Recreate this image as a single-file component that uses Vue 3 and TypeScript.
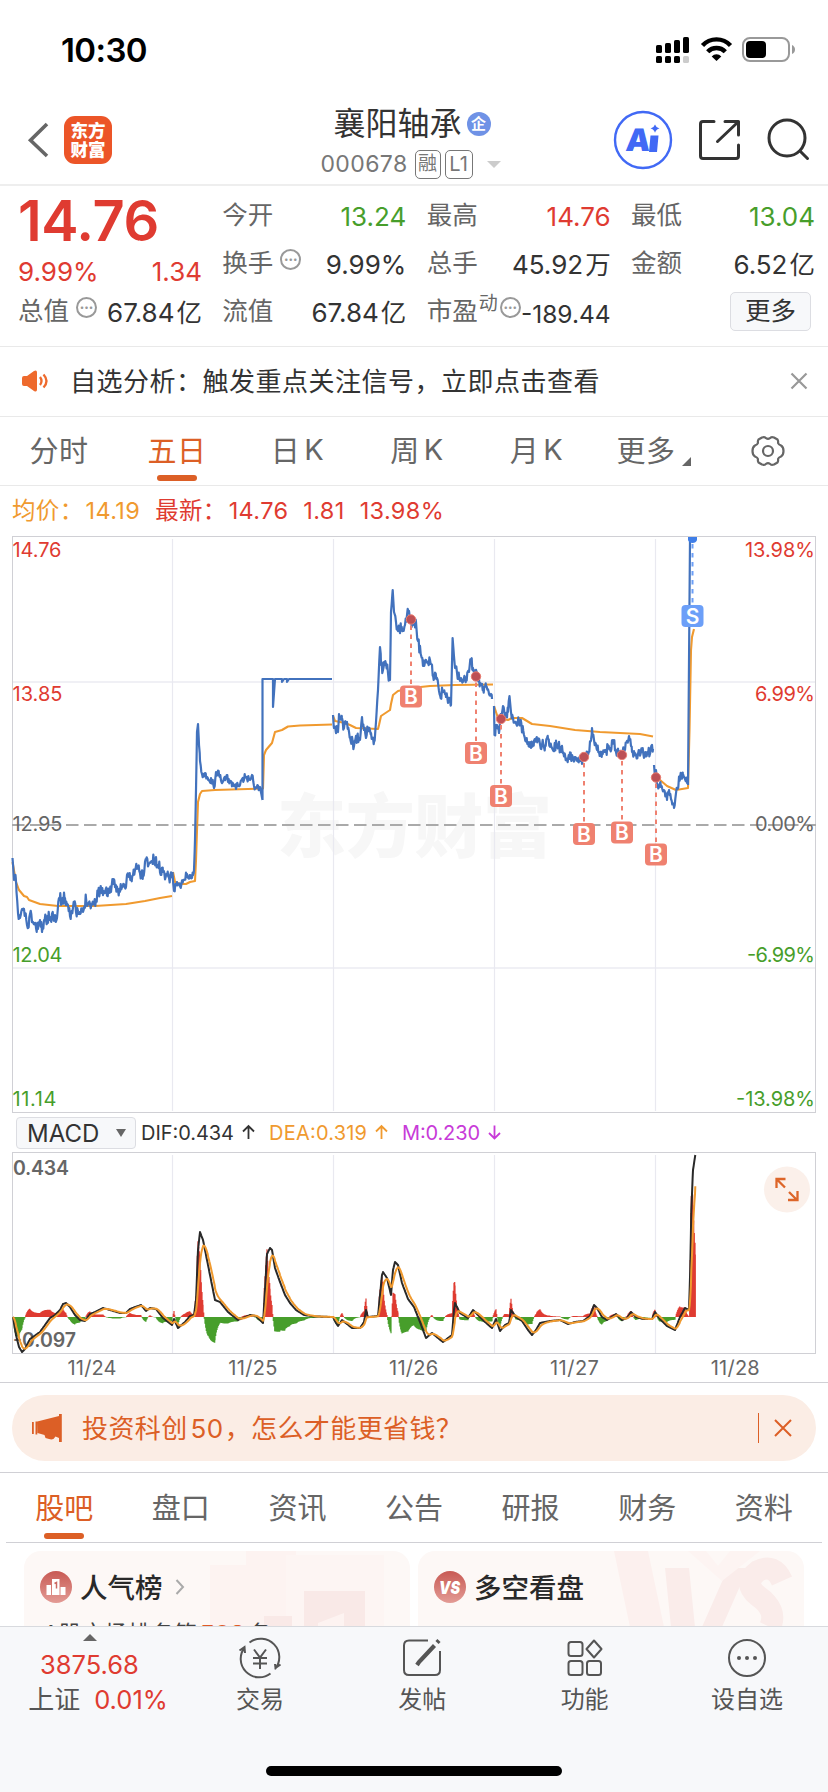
<script setup lang="ts">
type Pt = [number, number]

const tabs = [
  { t: '分时' },
  { t: '五日' },
  { t: '日', k: 'K' },
  { t: '周', k: 'K' },
  { t: '月', k: 'K' },
  { t: '更多' },
]
const sections = ['股吧', '盘口', '资讯', '公告', '研报', '财务', '资料']
const dayLines = [172.5, 333.5, 494.5, 655.5]
const dates = ['11/24', '11/25', '11/26', '11/27', '11/28']

const leftAxis = [
  { y: 557, t: '14.76', c: 'up', w: 49 },
  { y: 701, t: '13.85', c: 'up', w: 50 },
  { y: 831, t: '12.95', c: 'flat', w: 50 },
  { y: 962, t: '12.04', c: 'down', w: 50 },
  { y: 1106, t: '11.14', c: 'down', w: 44 },
]
const rightAxis = [
  { y: 557, t: '13.98%', c: 'up', w: 70 },
  { y: 701, t: '6.99%', c: 'up', w: 60 },
  { y: 831, t: '0.00%', c: 'flat', w: 60 },
  { y: 962, t: '-6.99%', c: 'down', w: 68 },
  { y: 1106, t: '-13.98%', c: 'down', w: 79 },
]

const buys = [
  { x: 411, y: 619.5, b: 696.5 },
  { x: 476, y: 676.5, b: 753 },
  { x: 501, y: 719, b: 796 },
  { x: 584, y: 757, b: 834 },
  { x: 622, y: 755, b: 832.5 },
  { x: 656, y: 777.5, b: 854.5 },
]

// price trace, one list per trading day
const priceDays: Pt[][] = [
  [[12.5, 858], [14, 880], [15.5, 875], [16.5, 892], [18, 913], [20, 918], [22, 909], [25, 914], [27, 925], [28, 928], [30, 914], [33, 922], [36, 928], [38, 929], [40, 920], [42, 932], [44, 920], [50, 917], [55, 915], [57, 918], [59, 898], [62, 900], [65, 898], [68, 905], [71, 914], [74, 904], [76, 912], [80, 914], [83, 912], [86, 898], [90, 904], [94, 904], [98, 893], [101, 888], [105, 893], [109, 891], [113, 884], [118, 890], [122, 887], [126, 887], [127, 875], [131, 879], [135, 870], [138, 867], [140, 873], [143, 875], [146, 860], [150, 863], [154, 860], [158, 866], [163, 872], [167, 875], [172, 878]],
  [[172.5, 872], [174, 891], [177, 882], [180, 886], [184, 880], [187, 874], [190, 878], [193, 875], [194, 870], [195, 840], [196, 790], [197, 732], [198, 724], [199, 745], [200, 761], [202, 774], [205, 773], [207, 777], [209, 780], [212, 781], [214, 788], [216, 772], [219, 775], [222, 783], [226, 777], [230, 781], [234, 786], [240, 785], [245, 777], [249, 779], [252, 775], [254, 786], [260, 787], [262.5, 800]],
  [[333, 715], [334, 728], [338, 732], [339, 714], [342, 718], [344, 728], [347, 722], [350, 737], [354, 746], [357, 738], [360, 740], [362, 717], [364, 730], [366, 738], [368, 728], [371, 733], [374, 742], [376, 722], [378, 690], [380, 647], [381, 665], [383, 670], [384, 662], [386, 664], [388, 673], [390, 680], [391, 612], [392.7, 590], [394, 612], [396, 622], [398, 631], [401, 628], [405, 625], [407, 615], [409, 611], [411, 620], [413, 625], [416, 622], [418, 641], [421, 655], [423, 666], [426, 660], [430, 660], [433, 675], [437, 678], [440, 695], [443, 692], [446, 697], [450, 700], [451, 705], [452.6, 638], [455, 668], [458, 675], [461, 678], [466, 677], [469, 672], [471, 661], [474, 670], [477, 676], [480, 683], [483, 688], [486, 686], [489, 694], [492, 699]],
  [[494, 706], [494.5, 735], [497, 725], [499, 733], [500, 720], [502, 713], [503, 706], [505, 717], [508, 712], [509.5, 696], [511, 712], [515, 722], [520, 721], [524, 735], [528, 742], [531, 748], [534, 741], [538, 740], [542, 745], [545, 746], [548, 739], [552, 748], [557, 745], [560, 748], [565, 755], [568, 759], [572, 755], [576, 758], [580, 761], [584, 756], [588, 755], [591, 740], [592, 728], [594, 740], [597, 750], [602, 753], [606, 750], [610, 748], [613, 740], [616, 752], [620, 755], [625, 750], [627, 741], [629, 736], [632, 752], [636, 755], [642, 752], [648, 754], [653, 749]],
  [[654, 765], [655, 780], [656, 770], [657, 784], [661, 787], [664, 790], [667, 800], [669, 790], [671, 799], [674, 808], [677, 788], [680, 778], [683, 774], [688, 785]],
]

const avgDays: Pt[][] = [
  [[12.5, 862], [16, 882], [19, 890], [24, 896], [27, 897], [29, 900], [40, 904], [58, 906], [95, 906], [126, 904], [145, 901], [160, 898], [172, 896]],
  [[173, 872], [175, 882], [180, 884], [186, 884], [190, 882], [195, 881], [196, 860], [197, 830], [198, 802], [200, 794], [202, 791], [215, 790], [263, 788.5], [264, 755], [266, 750], [272, 743], [275, 732], [282, 730], [288, 726.5], [300, 725.5], [332, 724.5]],
  [[333, 716], [335, 721], [345, 723], [350, 725], [356, 728], [378, 729], [379, 725], [381, 716], [390, 710], [391, 704], [393, 695], [398, 691], [411, 688], [430, 686], [455, 685], [493, 684.5]],
  [[494, 706], [498, 718], [508, 720], [512, 718], [522, 718], [532, 724], [550, 726], [575, 730], [600, 732], [640, 734], [653, 736.5]],
  [[655, 775], [660, 780], [667, 786], [676, 790], [688, 788], [689.5, 730], [691, 650], [692, 637], [694, 629]],
]

const difPts: Pt[] = [[13, 1317], [16, 1335], [19, 1347], [22, 1352], [25, 1349], [30, 1339], [40, 1332], [50, 1318], [55, 1315], [60, 1310], [63, 1304], [66, 1303], [70, 1307], [75, 1315], [80, 1320], [85, 1321], [90, 1314], [95, 1312], [103, 1308], [110, 1310], [120, 1313], [126, 1313], [130, 1309], [135, 1307], [141, 1305], [146, 1311], [150, 1308], [156, 1309], [163, 1318], [172, 1325], [174, 1319], [178, 1328], [185, 1322], [190, 1316], [194, 1315], [196, 1300], [198, 1250], [200, 1232], [203, 1240], [208, 1265], [215, 1300], [220, 1302], [228, 1312], [238, 1320], [250, 1315], [256, 1316], [263, 1323], [265, 1290], [267, 1254], [270, 1248], [272, 1250], [275, 1268], [280, 1282], [285, 1295], [290, 1303], [296, 1310], [304, 1315], [315, 1316.5], [333, 1317], [336, 1323], [338, 1326], [342, 1320], [352, 1328], [360, 1328], [364, 1322], [366, 1310], [368, 1317], [378, 1316], [380, 1295], [382, 1275], [383, 1272], [387, 1278], [391, 1295], [393, 1270], [395, 1262], [398, 1265], [402, 1283], [408, 1299], [414, 1307], [420, 1322], [426, 1338], [432, 1333], [438, 1338], [443, 1342], [452, 1335], [454, 1310], [455, 1303], [460, 1313], [468, 1318], [473, 1310], [480, 1317], [485, 1322], [492, 1328], [496, 1319], [500, 1331], [505, 1325], [509, 1323], [511, 1310], [516, 1317], [522, 1321], [528, 1330], [532, 1335], [536, 1330], [540, 1323], [550, 1321], [560, 1320], [568, 1324], [575, 1322], [583, 1321], [590, 1316], [594, 1305], [597, 1308], [602, 1317], [607, 1320], [616, 1314], [622, 1320], [627, 1318], [631, 1312], [636, 1317], [643, 1319], [652, 1319], [655, 1312], [660, 1319], [667, 1326], [675, 1330], [680, 1317], [685, 1308], [689, 1310], [690.2, 1270], [691.3, 1210], [693, 1170], [695.3, 1155]]

let seed = 11
const rand = (): number => {
  seed = (seed * 16807) % 2147483647
  return seed / 2147483647 - 0.5
}

const toPath = (pts: Pt[]): string =>
  pts.map(([x, y], i) => `${i ? 'L' : 'M'}${x.toFixed(1)} ${y.toFixed(1)}`).join('')

// minute-level ripple between the anchor points
const ripple = (pts: Pt[], amp: number): Pt[] => {
  const out: Pt[] = []
  for (let i = 0; i < pts.length - 1; i++) {
    const [x0, y0] = pts[i]
    const [x1, y1] = pts[i + 1]
    out.push([x0, y0])
    const a = Math.abs(y1 - y0) > 20 ? 2 : amp
    for (let x = x0 + 0.67; x < x1 - 0.3; x += 0.67) {
      out.push([x, y0 + ((y1 - y0) * (x - x0)) / (x1 - x0) + rand() * a])
    }
  }
  out.push(pts[pts.length - 1])
  return out
}

const amps = [12, 7, 11, 11, 10]
const pricePath =
  priceDays.map((d, i) => toPath(ripple(d, amps[i]))).join('') +
  'M262.5 800V679H273V707L275 679H282V682L284 679H287V682L289 679H332M688 785L690 540H692'
const avgPath = avgDays.map(toPath).join('')

const ZERO = 1317
const dif: Pt[] = []
for (let i = 0; i < difPts.length - 1; i++) {
  const [x0, y0] = difPts[i]
  const [x1, y1] = difPts[i + 1]
  for (let x = x0; x < x1; x += 0.667) {
    dif.push([x, y0 + ((y1 - y0) * (x - x0)) / (x1 - x0)])
  }
}
dif.push(difPts[difPts.length - 1])
const dea: Pt[] = []
let ema = ZERO
dif.forEach(([x, y]) => {
  ema += (y - ema) * 0.2
  dea.push([x, ema])
})
let redPath = ''
let greenPath = ''
dif.forEach(([x, y], i) => {
  const h = (y - dea[i][1]) * 2
  const bar = `M${x.toFixed(1)} ${ZERO}V${(ZERO + h).toFixed(1)}`
  if (h < 0) redPath += bar
  else greenPath += bar
})
const difPath = toPath(dif)
const deaPath = toPath(dea)
</script>

<template>
  <div class="phone">
    <div class="status">
      <span class="clock">10:30</span>
      <svg class="status-icons" width="142" height="30" viewBox="652 34 142 30">
        <g>
          <rect x="655" y="45" width="6" height="8" rx="1.6" /><rect x="664" y="43" width="6" height="10" rx="1.6" />
          <rect x="673" y="40" width="6" height="13" rx="1.6" /><rect x="682" y="37" width="6" height="16" rx="1.6" />
          <rect x="655" y="56" width="6" height="7" rx="1.6" /><rect x="664" y="56" width="6" height="7" rx="1.6" />
          <rect x="673" y="56" width="6" height="7" rx="1.6" /><rect x="682" y="56" width="6" height="7" rx="1.6" fill="#ccc" />
        </g>
        <g fill="none" stroke="#000" stroke-width="4.4">
          <path d="M701.5 45.5a19 19 0 0 1 28 0" /><path d="M706.7 51.8a12.2 12.2 0 0 1 17.6 0" />
        </g>
        <path d="M715.5 61l-4.800-4.600a6.600 6.600 0 0 1 9.600 0z" />
        <rect x="742" y="38" width="46" height="23" rx="7" fill="none" stroke="#999" stroke-width="2" />
        <rect x="745" y="41" width="20" height="17" rx="4" /><path d="M791 45v9q3-1.500 3-4.500t-3-4.500z" fill="#999" />
      </svg>
    </div>

    <header class="head">
      <svg class="back" width="24" height="40" viewBox="0 0 24 40"><path d="M20 4L3.500 20.300 20 36" fill="none" stroke="#666" stroke-width="3.600" /></svg>
      <div class="logo"><span>东方</span><span>财富</span></div>
      <div class="name">
        <div class="title">襄阳轴承<i class="qi">企</i></div>
        <div class="code"><span>000678</span><b>融</b><b class="l1">L1</b><i class="caret"></i></div>
      </div>
      <svg class="tools" width="216" height="60" viewBox="610 110 216 60" fill="none">
        <circle cx="642" cy="140" r="28" stroke="#4169f5" stroke-width="2.400" />
        <text class="ai" transform="translate(624 151) skewX(-5)" textLength="22">A</text>
        <path d="M649.500 135.500h8l-1.500 16.500h-8z M654 124.500q1 3.200 4.500 4-3.500.8-4.500 4.300-1-3.500-4.500-4.300 3.500-.8 4.500-4z" fill="#4169f5" />
        <g stroke="#333" stroke-width="3" stroke-linejoin="round" stroke-linecap="round">
          <path d="M713 121.500h-11q-2.500 0-2.500 2.500v32q0 2.500 2.500 2.500h33q2.500 0 2.500-2.500v-11M724 121.500h13.500V135M736.500 122.500l-20 19" />
          <circle cx="786" cy="138" r="18" /><path d="M799 151l7.500 7.500" />
        </g>
      </svg>
    </header>

    <section class="quote">
      <div class="col first">
        <div class="price">14.76</div>
        <div class="cell up pct"><span>9.99%</span><span>1.34</span></div>
        <div class="cell last"><label>总值<i class="dots">•••</i></label><span>67.84<em>亿</em></span></div>
      </div>
      <div class="col">
        <div class="cell"><label>今开</label><span class="down">13.24</span></div>
        <div class="cell"><label>换手<i class="dots">•••</i></label><span>9.99%</span></div>
        <div class="cell"><label>流值</label><span>67.84<em>亿</em></span></div>
      </div>
      <div class="col">
        <div class="cell"><label>最高</label><span class="up">14.76</span></div>
        <div class="cell"><label>总手</label><span>45.92<em>万</em></span></div>
        <div class="cell"><label>市盈<sup>动</sup><i class="dots tight">•••</i></label><span class="pe">-189.44</span></div>
      </div>
      <div class="col">
        <div class="cell"><label>最低</label><span class="down">13.04</span></div>
        <div class="cell"><label>金额</label><span>6.52<em>亿</em></span></div>
        <div class="cell end"><button class="more">更多</button></div>
      </div>
    </section>

    <section class="notice">
      <svg width="28" height="24" viewBox="0 0 28 24"><path d="M1 9q0-2 2-2h3l7-5q3-1.500 3 1.500v17q0 3-3 1.500l-7-5H3q-2 0-2-2z" fill="#ee6a2d" /><path d="M19 8q3 4 0 8M22.500 5.500q6 6.500 0 13" fill="none" stroke="#ee6a2d" stroke-width="2.300" /></svg>
      <span>自选分析：触发重点关注信号，立即点击查看</span>
      <svg class="close" width="18" height="18" viewBox="0 0 18 18"><path d="M1.500 1.500l15 15M16.500 1.500l-15 15" stroke="#999" stroke-width="2.200" /></svg>
    </section>

    <nav class="tabs">
      <span v-for="(t, i) in tabs" :key="t.t" :class="['tab', `tab-${i}`, { on: i === 1, menu: i === 5 }]">{{ t.t }}<i v-if="t.k">{{ t.k }}</i></span>
      <span class="tab gear">
        <svg width="34" height="34" viewBox="-17 -17 34 34" fill="none" stroke="#666" stroke-width="2.200" stroke-linejoin="round">
          <path d="M-6-13.500Q-3-14.500-2-12.800 0-11.500 2-12.800 3-14.500 6-13.500L9.500-11.500Q10.500-9.500 10-8 10.500-6.500 13-5.500 15.500-4 15.500 0 15.500 4 13 5.500 10.500 6.500 10 8 10.500 9.500 9.500 11.500L6 13.500Q3 14.500 2 12.800 0 11.500-2 12.800-3 14.500-6 13.500L-9.500 11.500Q-10.500 9.500-10 8-10.500 6.500-13 5.500-15.500 4-15.500 0-15.500-4-13-5.500-10.500-6.500-10-8-10.500-9.500-9.500-11.500z" />
          <circle r="5" />
        </svg>
      </span>
    </nav>

    <div class="legend"><span class="gold">均价：<u>14.19</u></span><span class="up">最新：<u>14.76</u></span><span class="up">1.81</span><span class="up">13.98%</span></div>

    <svg class="chart" width="828" height="584" viewBox="0 531 828 584">
      <text class="mark" x="277" y="852" textLength="275">东方财富</text>
      <path d="M12 682H816M12 968H816" stroke="#f0f0f5" stroke-width="2" />
      <path v-for="x in dayLines" :key="x" :d="`M${x} 539V1111`" stroke="#e9e9f0" stroke-width="1.200" />
      <rect x="12.500" y="536.500" width="803" height="576" fill="none" stroke="#d0d0d5" />
      <path d="M12 825H816" stroke="#aaa" stroke-width="2" stroke-dasharray="12.500 5.500" />
      <path :d="avgPath" fill="none" stroke="#f09a2f" stroke-width="2.100" stroke-linejoin="round" />
      <path :d="pricePath" fill="none" stroke="#4272bd" stroke-width="2.200" stroke-linejoin="round" />
      <text v-for="a in leftAxis" :key="a.t" :class="['axis', a.c]" x="12.500" :y="a.y" :textLength="a.w">{{ a.t }}</text>
      <text v-for="a in rightAxis" :key="a.t" :class="['axis', a.c]" :x="815 - a.w" :y="a.y" :textLength="a.w">{{ a.t }}</text>
      <g v-for="m in buys" :key="m.x">
        <path :d="`M${m.x} ${m.y + 6}V${m.b - 11}`" stroke="#ef8170" stroke-width="2" stroke-dasharray="4.500 4.500" />
        <circle :cx="m.x" :cy="m.y" r="4.700" fill="#bd5055" stroke="#e97c70" />
        <rect :x="m.x - 11" :y="m.b - 11" width="22" height="22" rx="4" fill="#ef8170" />
        <text class="flag" :x="m.x" :y="m.b + 7.500">B</text>
      </g>
      <path d="M692.500 544V605" stroke="#6c9ff8" stroke-width="2" stroke-dasharray="4.500 4.500" />
      <path d="M688 537h9v3q-1 3-4.500 3t-4.500-3z" fill="#3f7ee8" />
      <rect x="681.500" y="605" width="22" height="22" rx="4" fill="#6c9ff8" />
      <text class="flag" x="692.500" y="623.500">S</text>
    </svg>

    <div class="macd-row">
      <div class="select">MACD<i></i></div>
      <svg width="380" height="30" viewBox="0 0 380 30" class="vals">
        <text x="0" y="22.500" textLength="93" fill="#333">DIF:0.434</text>
        <text x="128" y="22.500" textLength="98" fill="#f09a2f">DEA:0.319</text>
        <text x="261" y="22.500" textLength="78" fill="#c83ad8">M:0.230</text>
        <g fill="none" stroke-width="1.800"><path d="M107.500 22V9M102 14.500l5.500-5.500 5.500 5.500" stroke="#333" /><path d="M240.500 22V9M235 14.500l5.500-5.500 5.500 5.500" stroke="#f09a2f" /><path d="M353.500 8.500v13M348 16l5.500 5.500 5.500-5.500" stroke="#c83ad8" /></g>
      </svg>
    </div>

    <svg class="macd" width="828" height="231" viewBox="0 1151 828 231">
      <rect x="12.500" y="1152.500" width="803" height="201" fill="none" stroke="#d0d0d5" />
      <path v-for="x in dayLines" :key="x" :d="`M${x} 1155V1353`" stroke="#e9e9f0" stroke-width="1.200" />
      <path :d="greenPath" stroke="#479e2b" stroke-width="1.200" />
      <path :d="redPath" stroke="#df3b31" stroke-width="1.200" />
      <text class="scale" x="13" y="1175" textLength="56">0.434</text>
      <text class="scale" x="13" y="1347" textLength="63">-0.097</text>
      <path :d="difPath" fill="none" stroke="#292929" stroke-width="2" stroke-linejoin="round" />
      <path :d="deaPath" fill="none" stroke="#f09a2f" stroke-width="2" stroke-linejoin="round" />
      <circle cx="787" cy="1189.500" r="23" fill="#fbf0ea" />
      <path d="M785 1187.500l-8.500-8.500M776.500 1188v-9h9M789 1192l8.500 8.500M788 1200h9.500v-9" fill="none" stroke="#dd6529" stroke-width="2.300" />
      <text v-for="(d, i) in dates" :key="d" class="date" :x="92 + i * 160.800" y="1375" textLength="49">{{ d }}</text>
    </svg>

    <div class="promo-wrap">
      <div class="promo">
        <svg width="32" height="28" viewBox="0 0 32 28" fill="#dc5f26"><path d="M1 8h1.800v12H1zM4.500 7.500h1.800v13H4.500zM6.300 7.500L28 2v22l-3.500-1.500q-2 4-6.500 2.500l-3.500-1-1-3-7-2z" /><path d="M28 0h2.800v28H28z" /></svg>
        <span class="ptxt">投资科创<i>50</i>，怎么才能更省钱？</span>
        <i class="bar"></i>
        <svg width="18" height="18" viewBox="0 0 18 18"><path d="M1 1l16 16M17 1L1 17" stroke="#dc5f26" stroke-width="2" /></svg>
      </div>
    </div>

    <nav class="sections"><span v-for="(s, i) in sections" :key="s" :class="{ on: i === 0 }">{{ s }}</span></nav>

    <div class="cards">
      <div class="card">
        <svg class="deco" width="386" height="76" viewBox="0 0 386 76"><path d="M186 14h36V0h50v76h-86z" fill="#fdf3f1" /><path d="M262 4h98v72h-98z" fill="#fdf5f3" /><path d="M280 40h61v36h-61zM240 65h28v11h-28z" fill="#f9e9e7" /><path d="M294 72l26-10v14h-26z" fill="#fdf3f1" /></svg>
        <div class="ct">
          <svg width="32" height="32" viewBox="0 0 32 32"><defs><linearGradient id="g1" x2="0" y2="1"><stop stop-color="#c85a54" /><stop offset="1" stop-color="#e39b95" /></linearGradient></defs><circle cx="16" cy="16" r="16" fill="url(#g1)" /><path d="M6.500 14h4.500v10H6.500zM12 8h7.500v16H12zM20.500 16h5v8h-5z" fill="#fff" /><path d="M14.500 12.500l2-1v6" fill="none" stroke="#cb6a64" stroke-width="1.500" /></svg>
          <span>人气榜</span>
          <svg width="10" height="16" viewBox="0 0 10 16"><path d="M1.500 1l6.500 7-6.500 7" fill="none" stroke="#aaa" stroke-width="2" /></svg>
        </div>
        <div class="rank">A股市场排名第<b>508</b>名</div>
      </div>
      <div class="card">
        <svg class="deco" width="386" height="76" viewBox="0 0 386 76"><path d="M196 0h34l16 76h-34z" fill="#fcf0ee" /><path d="M247 17h24l6 59h-24zM284 76l26-59h20l-26 59z" fill="#faecea" /><path d="M364 30q-8-18-24-10-16 12 0 25 20 14 12 31" fill="none" stroke="#faecea" stroke-width="22" /><path d="M270 0h18l12 15 12-15h30l-38 30z" fill="#fdf4f2" /></svg>
        <div class="ct">
          <svg width="32" height="32" viewBox="0 0 32 32"><circle cx="16" cy="16" r="16" fill="url(#g1)" /><text class="vs" x="5" y="23" textLength="21" lengthAdjust="spacingAndGlyphs">VS</text></svg>
          <span>多空看盘</span>
        </div>
      </div>
    </div>

    <footer class="dock">
      <div class="index"><i></i><strong>3875.68</strong><div>上证<span>0.01%</span></div></div>
      <div class="item">
        <svg width="44" height="42" viewBox="-22 -21 44 42"><path d="M-10.500-15.500a18.500 18.500 0 0 1 25.500 26.500M10.500 15.500a18.500 18.500 0 0 1-25.500-26.500M-20.500-7.500l5-3.500.5 6M20.500 6.500l-5 3.500-.5-4M-6-8.500l6 8 6-8M0 0v11M-7 0H7M-7 5.500H7" /></svg><span>交易</span>
      </div>
      <div class="item">
        <svg width="44" height="42" viewBox="-22 -21 44 42"><path d="M6-17.500h-19q-5 0-5 5v24.500q0 5 5 5h26q5 0 5-5v-19" /><path d="M12.500-12.500L-3 4l-2 3" stroke-width="4.200" /><path d="M15-15.500l2-2" stroke-width="4.500" /></svg><span>发帖</span>
      </div>
      <div class="item">
        <svg width="44" height="42" viewBox="-22 -21 44 42"><rect x="-16.500" y="-16" width="14" height="14" rx="2.500" /><rect x="-16.500" y="3" width="14" height="14" rx="2.500" /><rect x="2" y="3" width="14" height="14" rx="2.500" /><path d="M9-17.500l7.500 8.500L9-.5 1.500-9z" stroke-linejoin="round" /></svg><span>功能</span>
      </div>
      <div class="item">
        <svg width="44" height="42" viewBox="-22 -21 44 42"><circle r="18" /><g fill="#555" stroke="none"><circle cx="-8" r="2" /><circle r="2" /><circle cx="8" r="2" /></g></svg><span>设自选</span>
      </div>
      <div class="home"></div>
    </footer>
  </div>
</template>

<style>
body { margin: 0; background: #fff; }
</style>

<style scoped>
.phone { width: 828px; height: 1792px; overflow: hidden; display: flex; flex-direction: column; background: #fff; color: #333; font-family: Inter, "Noto Sans CJK SC", sans-serif; box-sizing: border-box; }
.phone > * { flex: none; box-sizing: border-box; }
i, em { font-style: normal; }
svg { display: block; flex: none; }
.up { color: #df3b31; fill: #df3b31; }
.down { color: #479e2b; fill: #479e2b; }
.flat { fill: #666; }
.gold { color: #f09a2f; }

.status { height: 96px; padding: 34px 33px 0 61px; display: flex; justify-content: space-between; }
.clock { font-size: 33px; line-height: 32px; font-weight: 600; color: #000; letter-spacing: -.6px; }
.status-icons { fill: #000; }

.head { height: 90px; border-bottom: 2px solid #eee; display: flex; align-items: center; padding-left: 27px; }
.logo { width: 48px; height: 48px; margin: 0 0 1px 13px; border-radius: 11px; background: #ec5528; color: #fff; font-size: 17.500px; font-weight: 900; line-height: 19px; display: flex; flex-direction: column; align-items: center; justify-content: center; }
.name { width: 499px; text-align: center; padding-top: 2px; }
.title { height: 40px; display: flex; justify-content: center; align-items: center; font-size: 32px; line-height: 40px; padding-left: 101px; }
.qi { width: 24px; height: 24px; border-radius: 50%; background: #6f92e6; color: #fff; font-size: 15px; font-weight: 700; line-height: 23px; margin-left: 5px; }
.code { height: 32px; margin: 4px 0 -2px; display: flex; align-items: center; justify-content: center; color: #777; font-size: 23px; letter-spacing: .4px; padding-left: 98px; }
.code b { width: 26px; height: 29px; box-sizing: border-box; margin-left: 7px; border: 1.500px solid #777; border-radius: 5px; font-size: 19px; line-height: 26px; font-weight: 400; letter-spacing: 0; }
.code b.l1 { width: 28px; margin-left: 4px; font-size: 20px; }
.caret { border: 7px solid transparent; border-top-color: #ccc; border-bottom: 0; margin-left: 14px; }
.ai { font: 900 31px Inter, sans-serif; fill: #4169f5; }

.quote { height: 161px; border-bottom: 1px solid #e9e9e9; display: flex; padding: 7px 13px 0 18px; justify-content: space-between; }
.col { width: 184px; }
.cell { height: 48px; display: flex; align-items: center; justify-content: space-between; font-size: 26px; line-height: 48px; white-space: nowrap; }
.cell label { color: #666; display: flex; align-items: center; height: 48px; font-size: 25.500px; margin-top: -4px; }
.cell em { margin-left: 2px; font-size: 25.500px; line-height: 0; }
.price { height: 55px; font-size: 56px; line-height: 56px; font-weight: 600; color: #df3b31; letter-spacing: -.4px; }
.first .last { margin-top: -7px; }
.dots { width: 21px; height: 21px; box-sizing: border-box; border: 2px solid #999; border-radius: 50%; margin: -8px 0 0 7px; color: #999; font-size: 8px; line-height: 17px; text-align: center; }
.dots.tight { margin-left: 2px; }
.cell sup { font-size: 19px; line-height: 20px; margin: -14px 0 0 1px; vertical-align: baseline; align-self: center; }
.pe { font-size: 24.500px; padding-top: 2px; }
.end { justify-content: flex-end; }
.more { width: 81px; height: 39px; margin-right: 4px; margin-top: -4px; padding: 0; border: 1.500px solid #dcdde2; border-radius: 5px; background: #f7f8fa; font: 25.500px/34px Inter, "Noto Sans CJK SC", sans-serif; color: #333; }

.notice { height: 70px; border-bottom: 1px solid #e9e9e9; display: flex; align-items: center; padding: 0 20px 2px 21px; font-size: 26px; letter-spacing: .5px; }
.notice span { margin: -2px 0 0 21px; }
.close { margin-left: auto; }

.tabs { height: 69px; border-bottom: 1px solid #e9e9e9; display: flex; }
.tab { width: 118px; height: 67px; box-sizing: border-box; padding-bottom: 3px; display: flex; align-items: center; justify-content: center; font-size: 29px; color: #666; position: relative; letter-spacing: .4px; }
.tab i { margin-left: 4px; }
.tab-2 { padding-left: 5px; }
.tab-3 { padding-left: 8px; }
.tab-4 { padding-left: 11px; }
.tab.on { color: #dc5f26; }
.tab.on::after { content: ""; position: absolute; left: 39px; bottom: 3px; width: 40px; height: 6px; border-radius: 3px; background: #dc5f26; }
.tab.menu { padding-right: 6px; }
.tab.menu::after { content: ""; position: absolute; right: 17px; bottom: 18px; border-left: 9px solid transparent; border-bottom: 9px solid #666; }
.tab.gear { width: 120px; padding-bottom: 0; }

.legend { height: 45px; padding: 4px 0 0 12px; display: flex; align-items: center; gap: 15px; font-size: 23.500px; line-height: 40px; letter-spacing: .35px; white-space: nowrap; }
.legend u { text-decoration: none; margin-left: 2px; }
.axis { font: 20px Inter, sans-serif; }
.mark { font: 900 69px "Noto Sans CJK SC", sans-serif; fill: #f7f7f7; }
.flag { font: 600 21px Inter, sans-serif; fill: #fff; text-anchor: middle; }

.macd-row { height: 36px; display: flex; padding: 2px 0 0 16px; }
.select { width: 120px; height: 32px; box-sizing: border-box; border: 1.500px solid #dcdde2; border-radius: 4px; background: #f7f8fa; display: flex; justify-content: space-between; align-items: center; padding: 0 9px 0 10px; font-size: 24px; }
.select i { border: 5px solid transparent; border-top: 8px solid #666; border-bottom: 0; }
.vals { margin-left: 5px; font: 20px Inter, sans-serif; }
.scale { font: 600 19.500px Inter, sans-serif; fill: #666; }
.date { font: 20px Inter, sans-serif; fill: #666; text-anchor: middle; }

.promo-wrap { height: 91px; border-top: 1px solid #d0d0d5; border-bottom: 1px solid #d0d0d5; padding: 12px 12px 0; }
.promo { height: 66px; border-radius: 33px; background: #fbede5; color: #dc5f26; display: flex; align-items: center; padding: 0 24px 0 19px; font-size: 26px; letter-spacing: .4px; }
.ptxt { margin: -4px 0 0 19px; }
.ptxt i { margin: 0 1px 0 3px; }
.bar { width: 1.500px; height: 30px; background: #dc5f26; margin: 0 15px 0 auto; }

.sections { height: 70px; margin: 0 6px; border-bottom: 1px solid #d0d0d5; display: flex; }
.sections span { width: 116.600px; height: 69px; line-height: 71px; text-align: center; font-size: 29px; color: #666; position: relative; }
.sections .on { color: #dc5f26; }
.sections .on::after { content: ""; position: absolute; left: 38px; bottom: 3px; width: 40px; height: 6px; border-radius: 3px; background: #dc5f26; }

.cards { height: 83px; padding: 8px 24px 0; display: flex; gap: 8px; overflow: hidden; }
.card { width: 386px; height: 120px; border-radius: 17px; background: #fdf8f6; position: relative; overflow: hidden; flex: none; }
.deco { position: absolute; left: 0; top: 0; }
.ct { position: relative; height: 40px; padding: 16px 0 0 16px; display: flex; align-items: center; font-size: 27.500px; font-weight: 500; color: #292929; }
.ct span { margin: -3px 12px 0 8px; }
.rank { position: relative; padding: 14px 0 0 19px; font-size: 23px; line-height: 26px; color: #444; }
.rank b { color: #df5a28; margin: 0 3px; }
.vs { font: italic 900 18px Inter, sans-serif; fill: #fff; }

.dock { height: 167px; border-top: 1.500px solid #d8dade; background: #f7f8fa; display: flex; position: relative; padding-left: 17px; }
.index { width: 162px; display: flex; flex-direction: column; align-items: center; color: #555; font-size: 26px; line-height: 36px; }
.index i { border: 7px solid transparent; border-bottom-color: #666; border-top: 0; margin: 7px 16px 0 0; }
.index strong { font-weight: 400; color: #df3b31; margin: 6px 17px 0 0; font-size: 25.500px; }
.index div { margin-top: -1px; }
.index span { color: #df3b31; margin-left: 14px; font-size: 25.500px; }
.item { width: 162.300px; display: flex; flex-direction: column; align-items: center; color: #555; font-size: 24px; line-height: 34px; padding-top: 10px; }
.item svg { fill: none; stroke: #555; stroke-width: 2; }
.item span { margin-top: 4px; }
.home { position: absolute; left: 266px; top: 139px; width: 296px; height: 10px; border-radius: 5px; background: #000; }
</style>
